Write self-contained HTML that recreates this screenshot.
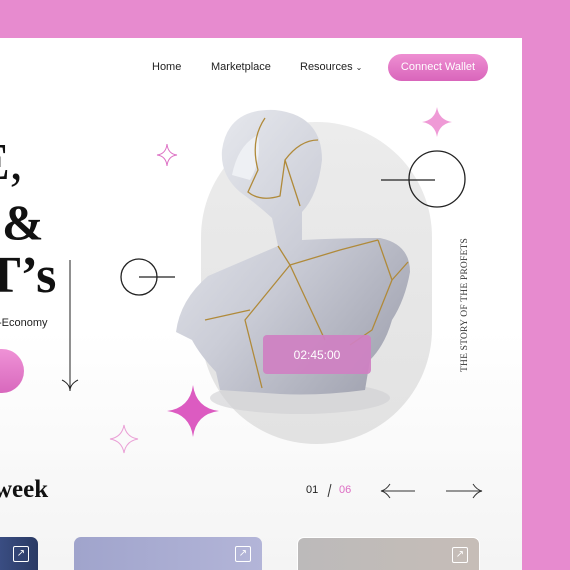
<!DOCTYPE html>
<html><head><meta charset="utf-8"><style>
*{margin:0;padding:0;box-sizing:border-box}
html,body{width:570px;height:570px;overflow:hidden}
body{background:#e78bcf;position:relative;font-family:"Liberation Sans",sans-serif}
.panel{position:absolute;left:0;top:38px;width:522px;height:532px;background:linear-gradient(#fff 0%,#fff 55%,#f4f4f4 100%);overflow:hidden}
.nav{position:absolute;top:61px;font-size:11px;color:#222}
.btn{position:absolute;left:388px;top:54px;width:100px;height:27px;border-radius:14px;background:linear-gradient(#ee8fd2,#d965bb);color:#fff;font-size:11px;text-align:center;line-height:27px}
.serif{font-family:"Liberation Serif",serif;color:#111;position:absolute;white-space:nowrap}
.card{position:absolute;top:537px;height:33px;border-radius:7px 7px 0 0}
.ic{position:absolute;top:9px;width:16px;height:16px;border:1.5px solid #fff;border-radius:2px;color:#fff;font-size:10px;line-height:13px;text-align:center}
</style></head><body>
<div class="panel"></div>
<div class="nav" style="left:152px">Home</div>
<div class="nav" style="left:211px">Marketplace</div>
<div class="nav" style="left:300px">Resources <span style="font-size:8px">&#8964;</span></div>
<div class="btn">Connect Wallet</div>

<div class="serif" style="left:-22px;top:133px;font-size:52px;line-height:60px;">E,</div>
<div class="serif" style="left:2px;top:194px;font-size:50px;line-height:56px;font-weight:bold">&amp;</div>
<div class="serif" style="left:-14px;top:248px;font-size:52px;line-height:56px;font-weight:bold">T’s</div>
<div style="position:absolute;left:-2px;top:317px;font-size:11px;color:#222">-Economy</div>
<div style="position:absolute;left:-26px;top:349px;width:50px;height:44px;border-radius:22px;background:linear-gradient(#ef92d6,#d868bd)"></div>

<svg width="570" height="570" style="position:absolute;left:0;top:0">
<defs>
<linearGradient id="pill" x1="0" y1="0" x2="0" y2="1"><stop offset="0" stop-color="#ececec"/><stop offset="1" stop-color="#e2e2e2"/></linearGradient>
<linearGradient id="st" x1="0" y1="0" x2="1" y2="1"><stop offset="0" stop-color="#eceef2"/><stop offset="0.5" stop-color="#cbcdd7"/><stop offset="1" stop-color="#9a9caa"/></linearGradient>
</defs>
<rect x="201" y="122" width="231" height="322" rx="115" fill="url(#pill)"/>
<ellipse cx="300" cy="398" rx="90" ry="16" fill="#cfcfd2" opacity="0.6"/>
<path d="M222 150 Q228 108 275 110 Q322 115 322 160 Q318 195 302 212 L302 240 Q340 238 380 238 Q410 244 410 272 Q405 300 392 320 Q385 345 370 360 L365 390 Q320 396 280 394 L220 390 L216 372 Q200 355 192 340 L176 332 Q180 300 208 276 Q250 258 278 246 L272 218 Q258 205 240 192 Q220 175 222 150Z" fill="url(#st)"/>
<path d="M232 175 Q238 145 258 135 Q262 160 250 180 Z" fill="#eef0f4"/>
<path d="M265 118 Q250 140 258 170 L248 192 Q260 202 280 196 L285 160 Q300 140 318 140 M285 160 L300 206 M278 246 L290 265 L245 320 L262 388 M290 265 L340 250 L378 240 M290 265 L325 340 M250 310 L205 320 M378 240 L392 280 L372 330 L350 345 M392 280 L408 262" stroke="#b08a3a" stroke-width="1.3" fill="none"/>
<rect x="263" y="335" width="108" height="39" rx="4" fill="#cf80c2" opacity="0.92"/>
<text x="317" y="359" fill="#fff" font-size="12" text-anchor="middle" font-family="Liberation Sans">02:45:00</text>
<circle cx="139" cy="277" r="18" stroke="#222" stroke-width="1.3" fill="none"/>
<line x1="139" y1="277" x2="175" y2="277" stroke="#222" stroke-width="1.3"/>
<circle cx="437" cy="179" r="28" stroke="#222" stroke-width="1.3" fill="none"/>
<line x1="381" y1="180" x2="435" y2="180" stroke="#222" stroke-width="1.3"/>
<line x1="70" y1="260" x2="70" y2="391" stroke="#222" stroke-width="1"/>
<path d="M62 380 Q70 384 70 391 Q70 384 78 380" stroke="#222" fill="none"/>
<path d="M167 144 Q168 154 177 155 Q168 156 167 166 Q166 156 157 155 Q166 154 167 144Z" fill="none" stroke="#dd70c4"/>
<path d="M437 107 Q439 120 452 122 Q439 124 437 137 Q435 124 422 122 Q435 120 437 107Z" fill="#ef9ad6"/>
<path d="M193 385 Q196 408 219 411 Q196 414 193 437 Q190 414 167 411 Q190 408 193 385Z" fill="#dc5bc1"/>
<path d="M124 425 Q126 437 138 439 Q126 441 124 453 Q122 441 110 439 Q122 437 124 425Z" fill="none" stroke="#eaa0d6"/>
<line x1="381" y1="491" x2="415" y2="491" stroke="#333"/>
<path d="M390 484 Q386 490 381 491 Q386 492 390 498" stroke="#333" fill="none"/>
<line x1="446" y1="491" x2="482" y2="491" stroke="#333"/>
<path d="M473 484 Q477 490 482 491 Q477 492 473 498" stroke="#333" fill="none"/>
<line x1="331" y1="484" x2="328" y2="497" stroke="#333"/>
</svg>
<div style="position:absolute;left:460px;top:372px;transform:rotate(-90deg);transform-origin:0 0;font-family:'Liberation Serif',serif;font-size:9.5px;color:#333;white-space:nowrap;letter-spacing:0.2px">THE STORY OF THE PROFETS</div>
<div class="serif" style="left:-6px;top:476px;font-size:25px;font-weight:bold">week</div>
<div style="position:absolute;left:306px;top:484px;font-size:11px;color:#222">01</div>
<div style="position:absolute;left:339px;top:484px;font-size:11px;color:#dd6ec4">06</div>
<div class="card" style="left:-10px;width:48px;background:linear-gradient(90deg,#3e528a,#2a3a64)"><div class="ic" style="left:23px">↗</div></div>
<div class="card" style="left:74px;width:188px;background:linear-gradient(90deg,#a0a4cc,#b3b5d8)"><div class="ic" style="left:161px">↗</div></div>
<div class="card" style="left:297px;width:183px;background:linear-gradient(90deg,#bcbaba,#c6bdb7);border:1px solid #fff;border-bottom:none"><div class="ic" style="left:154px">↗</div></div>
</body></html>
